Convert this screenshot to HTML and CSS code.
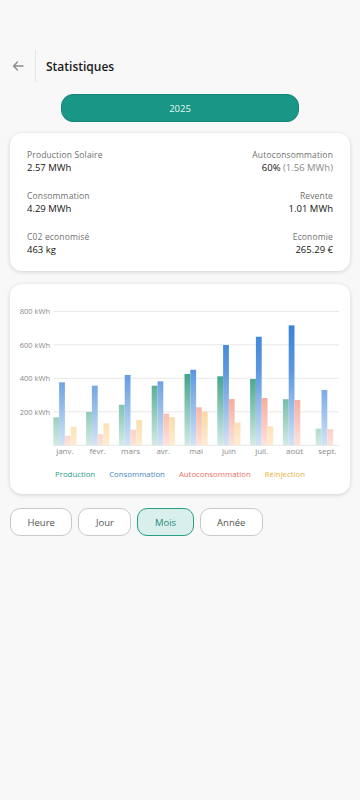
FILE: index.html
```html
<!DOCTYPE html>
<html lang="fr">
  <head>
    <meta charset="utf-8" />
    <meta name="viewport" content="width=device-width, initial-scale=1" />
    <title>Statistiques</title>
    <link rel="stylesheet" href="styles.css">
  </head>
  <body>
    <header class="topbar">
      <button class="back-btn" aria-label="Retour">
        <svg width="12" height="10" viewBox="0 0 12 10">
          <path d="M11 5H1.5M5.5 1L1.5 5l4 4" fill="none" stroke="#8a8a8a" stroke-width="1.3" stroke-linecap="round" stroke-linejoin="round" />
        </svg>
      </button>
      <span class="divider"></span>
      <h1>Statistiques</h1>
    </header>

    <button class="year-btn">2025</button>

    <!-- Totaux -->
    <div class="card stats-card">
      <div class="stat">
        <span class="stat-label">Production Solaire</span>
        <span class="stat-value">2.57 MWh</span>
      </div>
      <div class="stat right">
        <span class="stat-label">Autoconsommation</span>
        <span class="stat-value">60% <span class="muted">(1.56 MWh)</span></span>
      </div>
      <div class="stat">
        <span class="stat-label">Consommation</span>
        <span class="stat-value">4.29 MWh</span>
      </div>
      <div class="stat right">
        <span class="stat-label">Revente</span>
        <span class="stat-value">1.01 MWh</span>
      </div>
      <div class="stat">
        <span class="stat-label">C02 economisé</span>
        <span class="stat-value">463 kg</span>
      </div>
      <div class="stat right">
        <span class="stat-label">Economie</span>
        <span class="stat-value">265.29 €</span>
      </div>
    </div>

    <!-- Graphique mensuel -->
    <div class="card chart-card">
      <svg id="chart" class="chart" width="340" height="178" viewBox="0 0 340 178">
        <defs>
          <linearGradient id="g-prod" gradientUnits="userSpaceOnUse" x1="0" y1="27" x2="0" y2="161">
            <stop offset="0" stop-color="#238f72" />
            <stop offset="0.45" stop-color="#3ca184" />
            <stop offset="1" stop-color="#d3ebe5" />
          </linearGradient>
          <linearGradient id="g-cons" gradientUnits="userSpaceOnUse" x1="0" y1="27" x2="0" y2="161">
            <stop offset="0" stop-color="#2f7bd6" />
            <stop offset="0.45" stop-color="#5c98e0" />
            <stop offset="1" stop-color="#d3e3f6" />
          </linearGradient>
          <linearGradient id="g-auto" gradientUnits="userSpaceOnUse" x1="0" y1="27" x2="0" y2="161">
            <stop offset="0" stop-color="#ee6f5c" />
            <stop offset="0.45" stop-color="#f38d7b" />
            <stop offset="1" stop-color="#fde2db" />
          </linearGradient>
          <linearGradient id="g-rein" gradientUnits="userSpaceOnUse" x1="0" y1="27" x2="0" y2="161">
            <stop offset="0" stop-color="#f2ad3e" />
            <stop offset="0.45" stop-color="#f6c06a" />
            <stop offset="1" stop-color="#feedd2" />
          </linearGradient>
        </defs>
        <g id="grid"></g>
        <g id="bars"></g>
        <g id="months"></g>
      </svg>
      <div class="legend">
        <span class="legend-prod">Production</span>
        <span class="legend-cons">Consommation</span>
        <span class="legend-auto">Autoconsommation</span>
        <span class="legend-rein">Réinjection</span>
      </div>
    </div>

    <div class="periods">
      <button class="period-btn">Heure</button>
      <button class="period-btn">Jour</button>
      <button class="period-btn active">Mois</button>
      <button class="period-btn">Année</button>
    </div>

    <script>
      // kWh par mois : production, consommation, autoconsommation, réinjection
      const months = [
        ["janv.", 167, 376, 57, 111],
        ["févr.", 199, 356, 66, 131],
        ["mars", 242, 420, 93, 151],
        ["avr.", 356, 382, 189, 167],
        ["mai", 426, 451, 227, 201],
        ["juin", 412, 599, 276, 135],
        ["juil.", 396, 648, 282, 113],
        ["août", 275, 716, 270, 0],
        ["sept.", 99, 330, 96, 0],
      ];
      const series = ["g-prod", "g-cons", "g-auto", "g-rein"];
      const ns = "http://www.w3.org/2000/svg";
      const baseY = 161.3;
      const scale = 33.5 / 200;
      const left = 43.3;
      const right = 329;
      const step = 32.8;
      const barW = 5.8;

      const el = (name, attrs, text) => {
        const node = document.createElementNS(ns, name);
        Object.keys(attrs).forEach((k) => node.setAttribute(k, attrs[k]));
        if (text) node.textContent = text;
        return node;
      };

      // Grille et axe Y
      const grid = document.getElementById("grid");
      [800, 600, 400, 200].forEach((v) => {
        const y = baseY - v * scale;
        grid.appendChild(el("line", { x1: left, x2: right, y1: y, y2: y, class: "grid-line" }));
        grid.appendChild(el("text", { x: 40, y: y + 2.7, class: "axis-label" }, v + " kWh"));
      });
      grid.appendChild(el("line", { x1: left, x2: right, y1: baseY, y2: baseY, class: "grid-line" }));

      // Barres
      const bars = document.getElementById("bars");
      const labels = document.getElementById("months");
      months.forEach((m, i) => {
        const x0 = left + i * step;
        for (let s = 0; s < 4; s++) {
          const h = m[s + 1] * scale;
          if (!h) continue;
          bars.appendChild(el("rect", { x: x0 + s * barW, y: baseY - h, width: barW, height: h, fill: `url(#${series[s]})` }));
        }
        labels.appendChild(el("text", { x: x0 + barW * 2, y: 170, class: "month-label" }, m[0]));
      });
    </script>
  </body>
</html>
```

FILE: styles.css
```css
body {
  margin: 0;
  background-color: #f8f8f8;
  font-family: "Open Sans", "Noto Sans", sans-serif;
  color: #111;
}
button {
  font-family: inherit;
}
.topbar {
  display: flex;
  align-items: center;
  height: 32px;
  margin-top: 50px;
}
.back-btn {
  width: 35px;
  height: 32px;
  padding: 0;
  border: none;
  background: none;
  display: flex;
  align-items: center;
  justify-content: center;
}
.divider {
  width: 1px;
  height: 32px;
  background-color: #e6e6e6;
}
.topbar h1 {
  margin: 0 0 0 10px;
  font-size: 12px;
  font-weight: 600;
  color: #1a1a1a;
}
.year-btn {
  display: block;
  width: 238px;
  height: 28px;
  margin: 12px auto 0;
  background-color: #1a9686;
  border: 1px solid #158577;
  border-radius: 12px;
  color: #e4f6f2;
  font-size: 9.5px;
}
.card {
  background-color: #fff;
  border-radius: 12px;
  box-shadow: 0 1px 4px rgba(0, 0, 0, 0.16);
  margin: 0 10px;
}
.stats-card {
  margin-top: 11px;
  padding: 16px 17px 15px;
  display: grid;
  grid-template-columns: 1fr 1fr;
  row-gap: 16px;
}
.stat {
  display: flex;
  flex-direction: column;
}
.stat.right {
  text-align: right;
}
.stat-label {
  font-size: 8.5px;
  line-height: 12px;
  color: #707070;
  letter-spacing: 0.15px;
}
.stat-value {
  font-size: 9.5px;
  line-height: 13px;
  font-weight: 500;
  color: #141414;
}
.stat-value .muted {
  font-weight: 400;
  color: #8a8a8a;
}
.chart-card {
  margin-top: 13px;
  padding: 0 0 14px;
}
.chart {
  display: block;
}
.grid-line {
  stroke: #e8e8e8;
  stroke-width: 1;
}
.axis-label {
  font-size: 7.5px;
  fill: #8a8a8a;
  text-anchor: end;
}
.month-label {
  font-size: 8px;
  fill: #8a8a8a;
  text-anchor: middle;
}
.legend {
  display: flex;
  justify-content: center;
  gap: 14px;
  margin-top: 7px;
  font-size: 7.8px;
  line-height: 11px;
}
.legend-prod {
  color: #2a9d85;
}
.legend-cons {
  color: #3f86c6;
}
.legend-auto {
  color: #e8705f;
}
.legend-rein {
  color: #e6b445;
}
.periods {
  display: flex;
  gap: 6px;
  margin: 14px 10px 0;
}
.period-btn {
  height: 28px;
  padding: 0 16.5px;
  background-color: #fff;
  border: 1px solid #c9c9c9;
  border-radius: 10px;
  font-size: 9.5px;
  color: #555;
}
.period-btn.active {
  background-color: #d9efeb;
  border-color: #2a9d85;
  color: #1f8a78;
}
```
